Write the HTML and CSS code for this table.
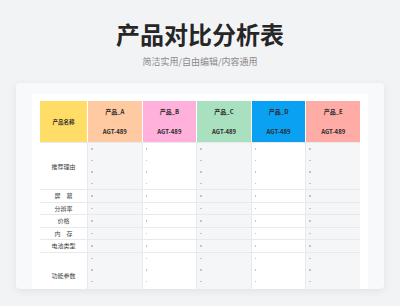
FILE: index.html
```html
<!DOCTYPE html>
<html lang="zh">
<head>
<meta charset="utf-8">
<link rel="stylesheet" href="styles.css">
</head>
<body>
<header class="intro">
  <h1 class="title">产品对比分析表</h1>
  <p class="subtitle">简洁实用/自由编辑/内容通用</p>
</header>
<section class="card">
  <div class="sheet">
    <div class="head">
      <div class="hcell h-name">产品名称</div>
      <div class="hcell h-a"><span>产品_A</span><span>AGT-489</span></div>
      <div class="hcell h-b"><span>产品_B</span><span>AGT-489</span></div>
      <div class="hcell h-c"><span>产品_C</span><span>AGT-489</span></div>
      <div class="hcell h-d"><span>产品_D</span><span>AGT-489</span></div>
      <div class="hcell h-e"><span>产品_E</span><span>AGT-489</span></div>
    </div>
    <div class="body">
      <div class="label">推荐理由</div>
      <div class="cell alt"><i></i><i></i><i></i><i></i></div>
      <div class="cell"><i></i><i></i><i></i><i></i></div>
      <div class="cell alt"><i></i><i></i><i></i><i></i></div>
      <div class="cell"><i></i><i></i><i></i><i></i></div>
      <div class="cell alt"><i></i><i></i><i></i><i></i></div>

      <div class="label">屏　幕</div>
      <div class="cell alt"><i></i></div>
      <div class="cell"><i></i></div>
      <div class="cell alt"><i></i></div>
      <div class="cell"><i></i></div>
      <div class="cell alt"><i></i></div>

      <div class="label">分辨率</div>
      <div class="cell alt"><i></i></div>
      <div class="cell"><i></i></div>
      <div class="cell alt"><i></i></div>
      <div class="cell"><i></i></div>
      <div class="cell alt"><i></i></div>

      <div class="label">价格</div>
      <div class="cell alt"><i></i></div>
      <div class="cell"><i></i></div>
      <div class="cell alt"><i></i></div>
      <div class="cell"><i></i></div>
      <div class="cell alt"><i></i></div>

      <div class="label">内　存</div>
      <div class="cell alt"><i></i></div>
      <div class="cell"><i></i></div>
      <div class="cell alt"><i></i></div>
      <div class="cell"><i></i></div>
      <div class="cell alt"><i></i></div>

      <div class="label">电池类型</div>
      <div class="cell alt"><i></i></div>
      <div class="cell"><i></i></div>
      <div class="cell alt"><i></i></div>
      <div class="cell"><i></i></div>
      <div class="cell alt"><i></i></div>

      <div class="label">功能参数</div>
      <div class="cell alt"><i></i><i></i><i></i><i></i></div>
      <div class="cell"><i></i><i></i><i></i><i></i></div>
      <div class="cell alt"><i></i><i></i><i></i><i></i></div>
      <div class="cell"><i></i><i></i><i></i><i></i></div>
      <div class="cell alt"><i></i><i></i><i></i><i></i></div>
    </div>
  </div>
</section>
</body>
</html>
```
FILE: styles.css
```css
* { box-sizing: border-box; }
html, body {
  margin: 0;
  padding: 0;
  background: #f2f3f5;
  font-family: "Noto Sans CJK SC", "Noto Sans", sans-serif;
  width: 400px;
  height: 306px;
  overflow: hidden;
}
.intro {
  padding-top: 19px;
  text-align: center;
}
.title {
  margin: 0;
  font-size: 24px;
  line-height: 30px;
  font-weight: 700;
  color: #262626;
}
.subtitle {
  margin: 7px 0 0;
  font-size: 9px;
  line-height: 12px;
  color: #8a8a8a;
}
.card {
  margin: 15px 16px 0;
  height: 206px;
  background: #f8f9fa;
  border-radius: 4px;
  box-shadow: 0 2px 8px rgba(0, 0, 0, 0.07);
  padding: 11px 16px 0;
  overflow: hidden;
}
.sheet {
  background: #fff;
  height: 100%;
  padding: 7px 8px 0;
  overflow: hidden;
}
.head, .body {
  display: grid;
  grid-template-columns: 47px repeat(5, 1fr);
  column-gap: 1px;
}
.head {
  height: 41px;
  background: #fff;
}
.hcell {
  display: flex;
  flex-direction: column;
  align-items: center;
  justify-content: center;
  font-size: 6px;
  line-height: 20px;
  font-weight: 700;
  color: #2b2b2b;
}
.h-name { background: #ffdd66; font-size: 5.5px; }
.h-a { background: #ffc9a1; }
.h-b { background: #ffb1dc; }
.h-c { background: #a9e0bf; }
.h-d { background: #0aa1f2; }
.h-e { background: #ffaca6; }
.body {
  row-gap: 1px;
  background: #e7e9ec;
  border-top: 1px solid #e7e9ec;
}
.label {
  background: #fff;
  display: flex;
  align-items: center;
  justify-content: center;
  font-size: 6px;
  color: #444;
}
.cell {
  background: #fff;
  padding: 0 3px;
}
.cell.alt { background: #f5f6f7; }
.cell i {
  display: flex;
  align-items: center;
  height: 11.5px;
}
.cell i::before {
  content: "";
  width: 1.5px;
  height: 1.5px;
  background: #c4c4c4;
}
```
